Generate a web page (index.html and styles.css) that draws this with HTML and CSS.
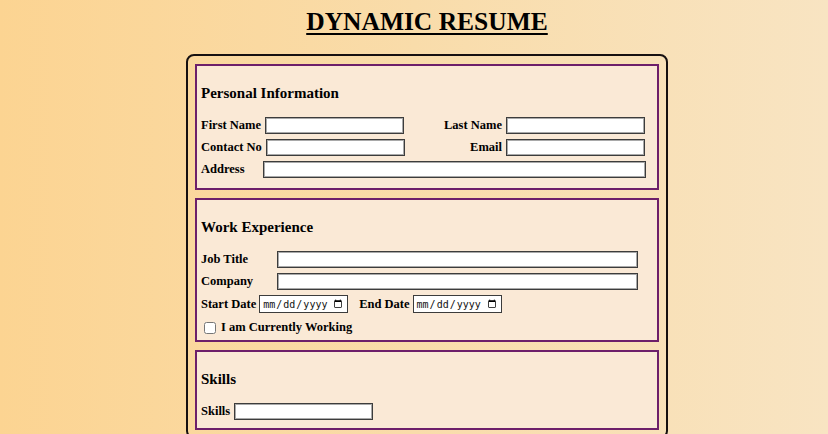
FILE: index.html
```html
<!DOCTYPE html>
<html lang="en">
<head>
<meta charset="utf-8">
<title>Dynamic Resume</title>
<link rel="stylesheet" href="styles.css">
</head>
<body>
  <h1 class="page-title">DYNAMIC RESUME</h1>
  <form class="resume">
    <section class="block block-personal">
      <h3 class="block-title">Personal Information</h3>
      <div class="rows">
        <div class="row split">
          <div class="pair"><label class="lbl" for="fname">First Name</label><input class="field" id="fname" type="text"></div>
          <div class="pair"><label class="lbl" for="lname">Last Name</label><input class="field" id="lname" type="text"></div>
        </div>
        <div class="row split">
          <div class="pair"><label class="lbl" for="phone">Contact No</label><input class="field" id="phone" type="text"></div>
          <div class="pair"><label class="lbl" for="email">Email</label><input class="field" id="email" type="text"></div>
        </div>
        <div class="row">
          <label class="lbl lbl-address" for="addr">Address</label><input class="field grow" id="addr" type="text">
        </div>
      </div>
    </section>

    <section class="block block-work">
      <h3 class="block-title">Work Experience</h3>
      <div class="rows">
        <div class="row work-row">
          <label class="lbl lbl-work" for="job">Job Title</label><input class="field grow" id="job" type="text">
        </div>
        <div class="row work-row">
          <label class="lbl lbl-work" for="company">Company</label><input class="field grow" id="company" type="text">
        </div>
        <div class="row dates">
          <label class="lbl" for="start">Start Date</label><input class="date" id="start" type="date">
          <label class="lbl lbl-end" for="end">End Date</label><input class="date" id="end" type="date">
        </div>
        <div class="row check-row">
          <input class="check" id="current" type="checkbox"><label class="lbl" for="current">I am Currently Working</label>
        </div>
      </div>
    </section>

    <section class="block block-skills">
      <h3 class="block-title">Skills</h3>
      <div class="rows">
        <div class="row">
          <label class="lbl" for="skills">Skills</label><input class="field" id="skills" type="text">
        </div>
      </div>
    </section>
  </form>
</body>
</html>
```

FILE: styles.css
```css
html, body {
  margin: 0;
}

body {
  min-height: 100vh;
  padding: 0 0 0 26px;
  box-sizing: border-box;
  font-family: "Liberation Serif", "Times New Roman", serif;
  color: #000;
  background: linear-gradient(to right, #fcd492 0%, #f9dcaa 50%, #f8e4c2 100%);
}

.page-title {
  margin: 0;
  padding-top: 7px;
  font-size: 25.5px;
  line-height: 30px;
  font-weight: bold;
  text-align: center;
  text-decoration: underline;
  text-underline-offset: 3px;
}

.resume {
  width: 482px;
  box-sizing: border-box;
  margin: 17px auto 0;
  padding: 8px 7px 7px;
  border: 2px solid #161010;
  border-radius: 8px;
  display: flex;
  flex-direction: column;
  gap: 8px;
}

.block {
  border: 2px solid #6d1f6a;
  background: #fae9d6;
  padding: 18px 12px 10px 4px;
}

.block-title {
  margin: 0 0 15px;
  font-size: 15px;
  line-height: 18px;
  font-weight: bold;
}

.rows {
  display: flex;
  flex-direction: column;
  gap: 5px;
}

.row {
  display: flex;
  align-items: center;
  gap: 4px;
  height: 17px;
}

.split {
  justify-content: space-between;
}

.pair {
  display: flex;
  align-items: center;
  gap: 4px;
}

.lbl {
  font-size: 12.5px;
  font-weight: bold;
  line-height: 17px;
  white-space: nowrap;
}

.field {
  width: 139px;
  height: 17px;
  box-sizing: border-box;
  margin: 0;
  padding: 0 3px;
  border: 1px solid #3c3c3c;
  box-shadow: inset 0 0 0 1px #a9a9a9;
  background: #fff;
  font: 12px "Liberation Sans", Arial, sans-serif;
}

.grow {
  flex: 1;
  width: auto;
}

.lbl-address {
  width: 58px;
}

.block-personal .lbl-address + .field {
  margin-right: -1px;
}

.block-work {
  padding-right: 19px;
  padding-bottom: 4px;
}

.lbl-work {
  width: 72px;
}

.dates {
  height: 18px;
  gap: 0;
}

.date {
  width: 89px;
  height: 18px;
  box-sizing: border-box;
  margin: 0 0 0 3px;
  padding: 0 2px;
  border: 1px solid #3c3c3c;
  background: #fff;
  font: 10px "DejaVu Sans Mono", "Liberation Mono", monospace;
  color: #000;
}

.date::-webkit-datetime-edit,
.date::-webkit-datetime-edit-fields-wrapper,
.date::-webkit-datetime-edit-month-field,
.date::-webkit-datetime-edit-day-field,
.date::-webkit-datetime-edit-year-field,
.date::-webkit-datetime-edit-text {
  color: #111;
}

.lbl-end {
  margin-left: 11px;
}

.check-row {
  margin-top: 1px;
  gap: 0;
}

.check {
  width: 12px;
  height: 12px;
  margin: 0 5px 0 3px;
}

.block-skills {
  padding-bottom: 8px;
}
```
